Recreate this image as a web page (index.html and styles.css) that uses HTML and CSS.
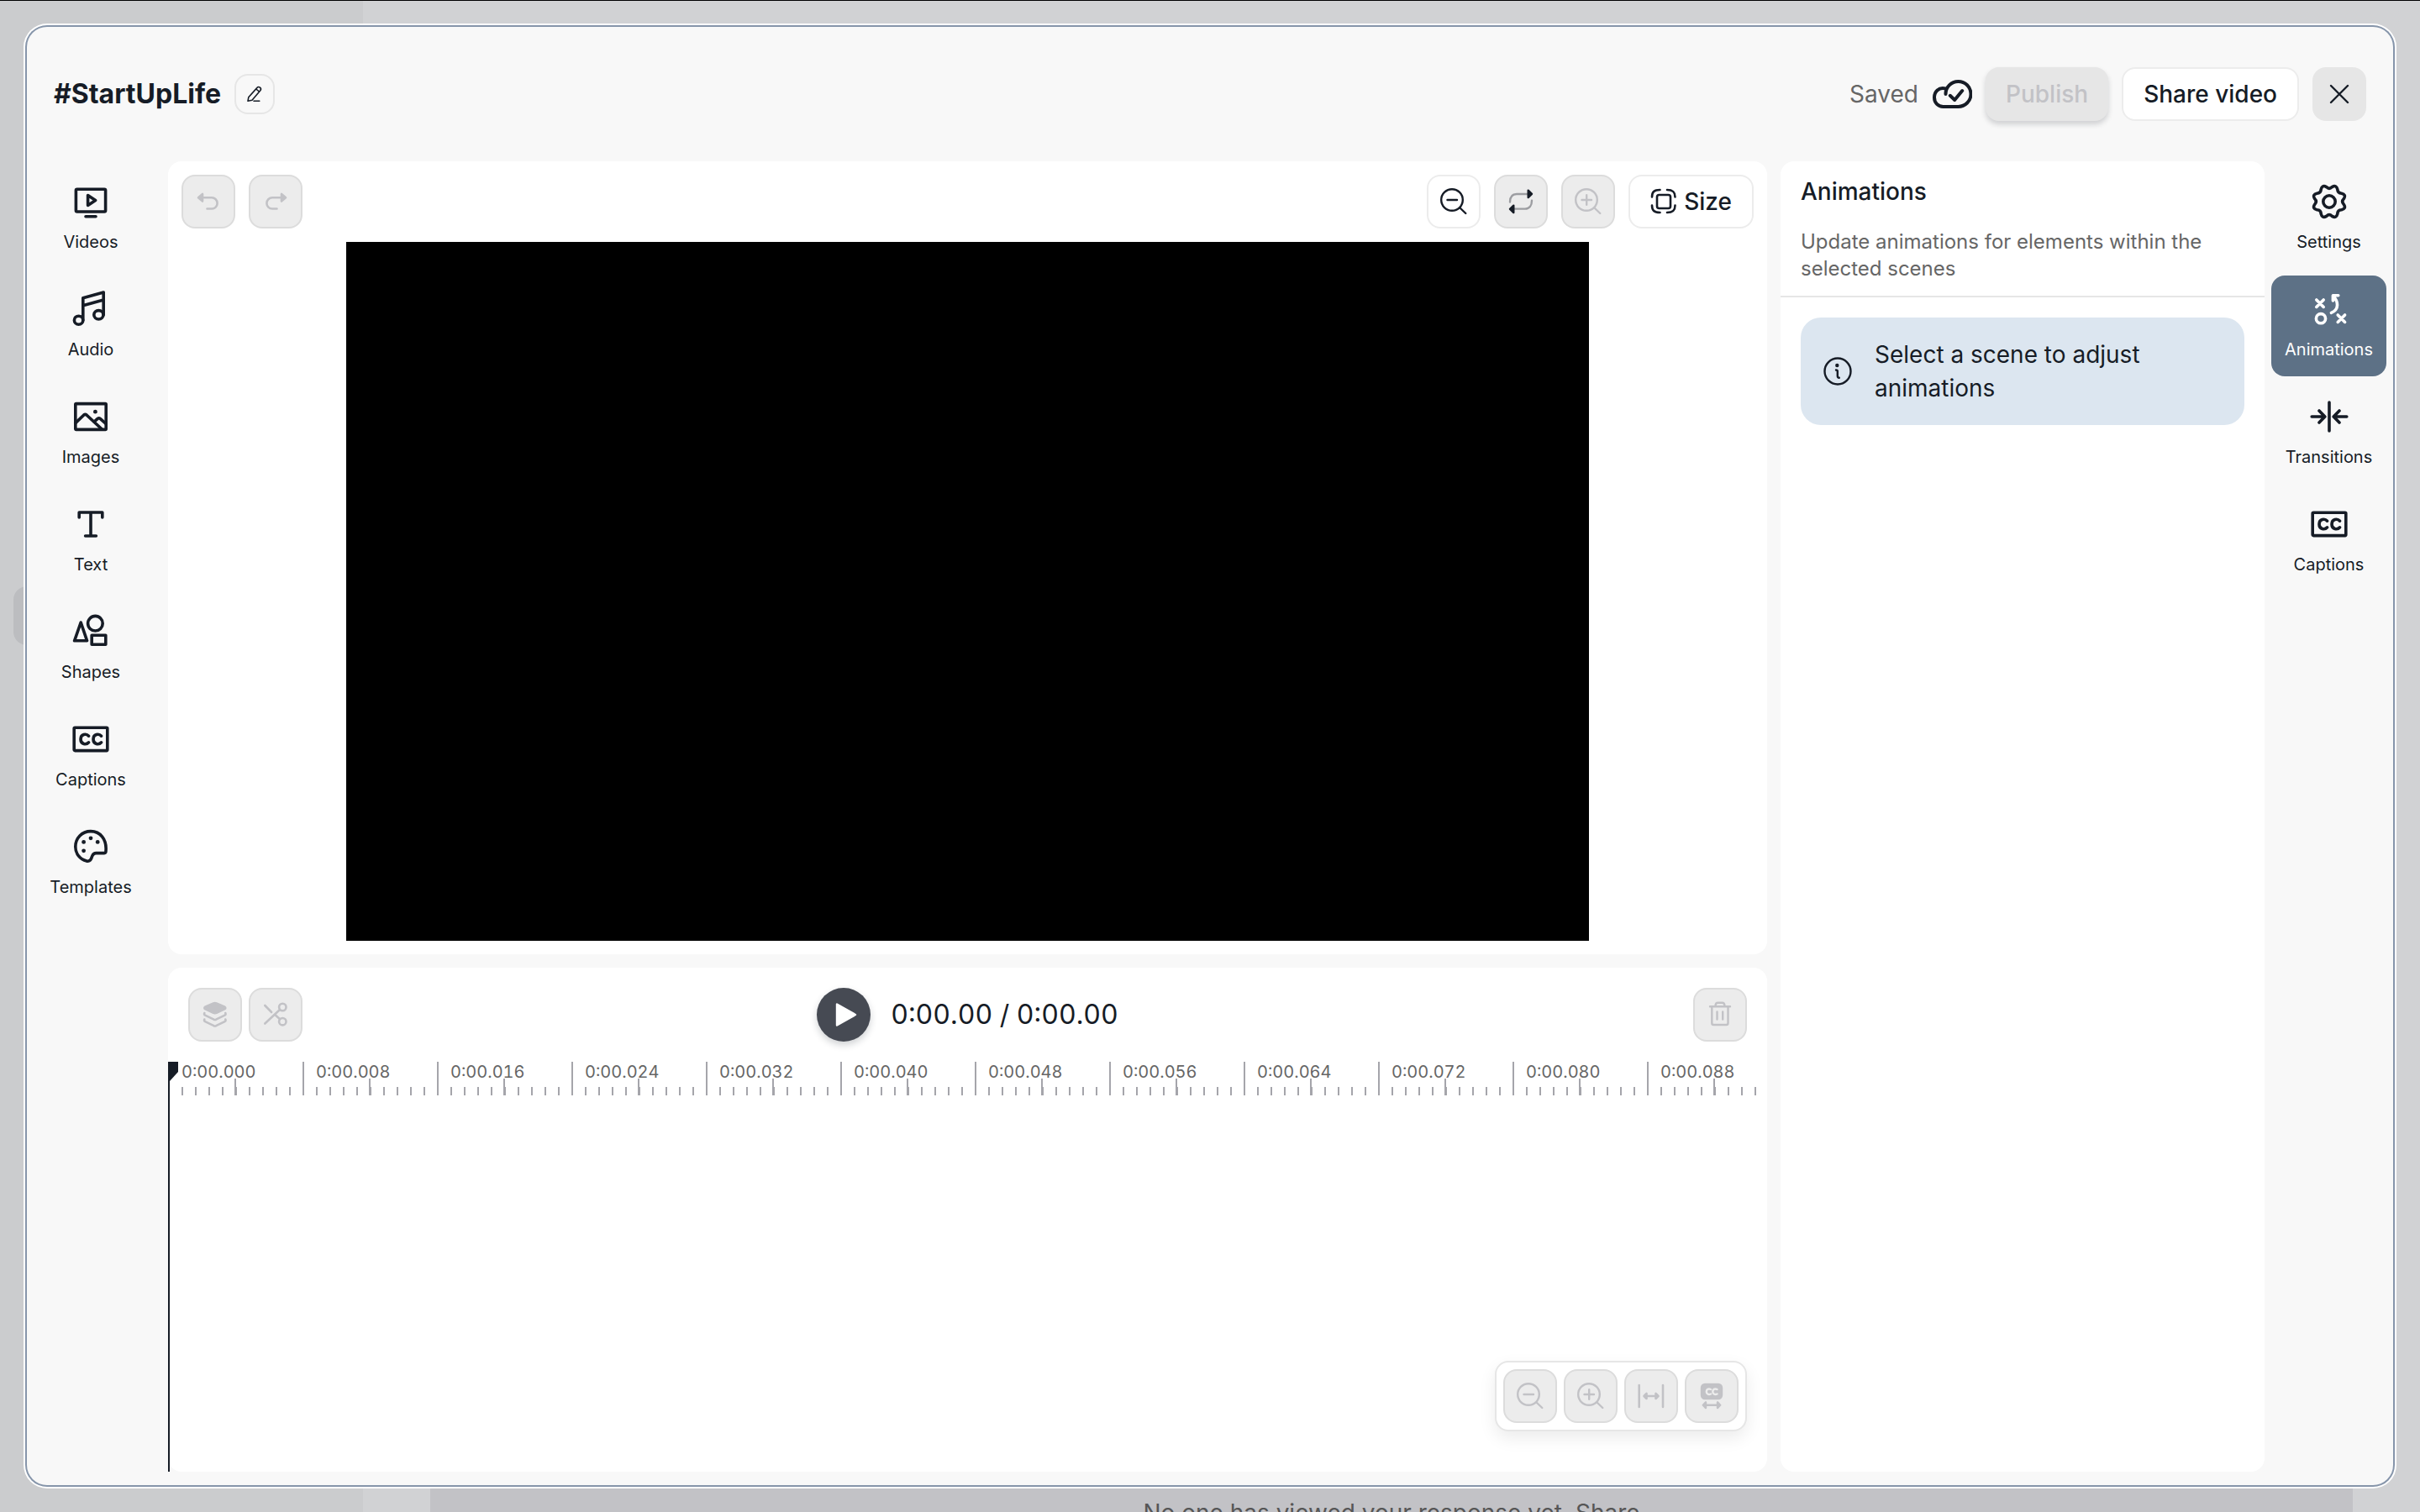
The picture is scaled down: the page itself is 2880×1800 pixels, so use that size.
FILE: index.html
```html
<!DOCTYPE html>
<html lang="en">
<head>
<meta charset="utf-8">
<meta name="viewport" content="width=device-width, initial-scale=1">
<title>#StartUpLife – Video editor</title>
<link rel="stylesheet" href="styles.css">
</head>
<body>
<svg class="sprite" aria-hidden="true">
  <symbol id="captions" viewBox="0 0 24 24"><rect x="2.1" y="5.1" width="19.8" height="13.7" rx=".5"/><path d="M10.8 10.1C9.3 8.4 6 8.9 6 12s3.300 3.600 4.800 1.900M18.300 10.100C16.800 8.400 13.500 8.900 13.500 12s3.300 3.600 4.800 1.900"/></symbol>
  <symbol id="zoom-out" viewBox="0 0 32 32"><circle cx="14" cy="14" r="12.800"/><path d="M8.500 14h11.500M23.500 23.500l6.800 6.500"/></symbol>
  <symbol id="zoom-in" viewBox="0 0 32 32"><circle cx="14" cy="14" r="12.800"/><path d="M8.500 14h11.500M14.200 8.300v11.500M23.500 23.500l6.800 6.500"/></symbol>
</svg>

<div class="backdrop" aria-hidden="true">
  <div class="backdrop-side"><span class="backdrop-handle"></span></div>
  <div class="backdrop-main"><p class="backdrop-note">No one has viewed your response yet. Share</p></div>
</div>

<main class="dialog" role="dialog" aria-labelledby="video-title">
  <header class="header">
    <h1 class="title" id="video-title">#StartUpLife</h1>
    <button class="edit" aria-label="Rename"><svg viewBox="0 0 24 24"><path d="M4 20.300l.8-4.500L14.800 4.600c1-1.200 2.400-1.300 3.600-.4s1.300 2.400.4 3.600L9 19.200l-5 1.100zM13.800 6l3.800 3.200M11 20.300h6.800"/></svg></button>
    <div class="header-actions">
      <span class="saved">Saved</span>
      <svg class="cloud" viewBox="0 0 48 48" aria-hidden="true"><path d="M13.500 38.900h18A15 15 0 1 0 16.500 24M16.200 17.500C8 15.500 3 21.500 3 28s4.500 10.900 10.500 10.900M21.800 25.800l5.400 5.200 9-11"/></svg>
      <button class="btn btn-publish" disabled>Publish</button>
      <button class="btn btn-share">Share video</button>
      <button class="btn btn-close" aria-label="Close"><svg class="icon" viewBox="0 0 32 32"><path d="M6 6l20 20M26 6L6 26"/></svg></button>
    </div>
  </header>

  <div class="workspace">
    <nav class="rail" aria-label="Media">
      <button class="rail-item"><svg viewBox="0 0 24 24"><rect x="3.200" y="4.600" width="17.600" height="13.400" rx=".7"/><path d="M10.300 8.300v5.900l4.500-2.950zM9 20.900h6"/></svg>Videos</button>
      <button class="rail-item"><svg viewBox="0 0 24 24"><ellipse cx="4.800" cy="18.600" rx="2.600" ry="2.500"/><ellipse cx="16.700" cy="15.400" rx="2.800" ry="2.600"/><path d="M7.400 18.600V5.400L19.600 2v13.400M7.400 9.900l12.200-3.400"/></svg>Audio</button>
      <button class="rail-item"><svg viewBox="0 0 24 24"><rect x="2.900" y="4.300" width="18.200" height="15.400" rx=".4"/><path d="M2.900 15.800l5-4.800c.6-.5 1-.5 1.600 0l9.300 8.600M13.900 15.200l2.200-2c.5-.4 1-.4 1.500 0l3.400 3"/><circle class="dot" cx="14.700" cy="9.100" r="1.200"/></svg>Images</button>
      <button class="rail-item"><svg viewBox="0 0 24 24"><path d="M5.100 8V5h13.800v3M12 5v14M8.800 19h6.400"/></svg>Text</button>
      <button class="rail-item"><svg viewBox="0 0 24 24"><path d="M6.100 6.500L2.300 17.400h7.500z"/><circle cx="14.700" cy="7.100" r="4.400"/><rect x="12.600" y="14.100" width="8.300" height="5.500"/></svg>Shapes</button>
      <button class="rail-item"><svg><use href="#captions"/></svg>Captions</button>
      <button class="rail-item"><svg viewBox="0 0 24 24"><path d="M20 15.800c.7 0 1-.5 1-1.300C21.600 7.500 17.600 2.800 12 2.800 6.700 2.800 2.900 6.900 2.900 12c0 4.200 2.700 7.600 6.600 8.500 1.200.3 2.400-.3 2.800-1.400.5-1.500.7-3.300 2.900-3.300z"/><g class="dot"><circle cx="7.800" cy="9.200" r="1.200"/><circle cx="12" cy="6.900" r="1.200"/><circle cx="16.100" cy="9.200" r="1.200"/><circle cx="7.800" cy="14.400" r="1.200"/></g></svg>Templates</button>
    </nav>

    <div class="center">
      <section class="panel stage" aria-label="Preview">
        <div class="toolbar">
          <div class="group">
            <button class="tool" disabled aria-label="Undo"><svg class="icon thick" viewBox="0 0 32 32"><path d="M9 11.300h11a6.600 6.600 0 0 1 0 13.200h-5.500"/><path class="solid" d="M4 11.300l5-4.300v8.600z"/></svg></button>
            <button class="tool" disabled aria-label="Redo"><svg class="icon thick" viewBox="0 0 32 32"><path d="M23 11.300H12a6.600 6.600 0 0 0 0 13.200h5.500"/><path class="solid" d="M28 11.300l-5-4.300v8.600z"/></svg></button>
          </div>
          <div class="group">
            <button class="tool plain" aria-label="Zoom out"><svg class="icon"><use href="#zoom-out"/></svg></button>
            <button class="tool reset" aria-label="Reset zoom"><svg class="icon" viewBox="0 0 32 32"><path class="faded" d="M3 16.500C3 10.500 6 7 11 7h13M29 14.800c0 6-3 9.800-8 9.800H8"/><path class="solid" d="M24.700 2.600l4.300 4.300-4.300 4.200zM7.300 20.600L3 24.900l4.300 4.200z"/></svg></button>
            <button class="tool" disabled aria-label="Zoom in"><svg class="icon"><use href="#zoom-in"/></svg></button>
            <button class="tool plain size"><svg class="icon thick" viewBox="0 0 32 32"><rect x="8" y="8" width="16" height="16" rx="2.500"/><path d="M2 10.500C2 4.500 4.500 2 11.500 2M20 2c7 0 9.500 2.500 9.500 8.500M29.500 20.500c0 6-2.500 8.500-9.500 8.500M11.500 29C4.500 29 2 26.500 2 20.500"/></svg>Size</button>
          </div>
        </div>
        <div class="canvas"></div>
      </section>

      <section class="panel timeline" aria-label="Timeline">
        <div class="transport">
          <div class="group tight">
            <button class="tool" disabled aria-label="Layers"><svg class="icon thick" viewBox="0 0 32 32"><path class="solid" d="M4 6.800L14 2.500c1.200-.5 2.400-.5 3.600 0l10 4.300c.9.500.9 1.700 0 2.300l-10 4.700c-1.200.5-2.400.5-3.600 0L4 9.100c-.9-.6-.9-1.800 0-2.300z"/><path d="M3.300 14c-.5 1.300-.2 2.200.8 2.700l10.400 5c.9.400 1.700.4 2.600 0l10.400-5c1-.5 1.300-1.400.8-2.700M3.300 21.500c-.5 1.300-.2 2.200.8 2.700l10.400 5c.9.400 1.700.4 2.600 0l10.400-5c1-.5 1.300-1.400.8-2.700"/></svg></button>
            <button class="tool" disabled aria-label="Split"><svg class="icon thick" viewBox="0 0 32 32"><circle cx="24.300" cy="7" r="4.200"/><circle cx="24.300" cy="24.200" r="4.200"/><path d="M3.300 5l7.800 8M21 10L3.300 26.500M15.800 16.500l5.300 4.700"/></svg></button>
          </div>
          <div class="playback">
            <button class="play" aria-label="Play"><svg class="icon" viewBox="0 0 32 32"><path class="solid" d="M8 3.500v25L30 16z"/></svg></button>
            <span class="time">0:00.00 / 0:00.00</span>
          </div>
          <div class="group end">
            <button class="tool" disabled aria-label="Delete"><svg class="icon" viewBox="0 0 32 32"><path d="M4 6.300h24M6.300 6.300V26c0 1.500.6 2 2 2h15.200c1.400 0 2-.5 2-2V6.300M10.500 6c0-2.700 1-4.200 3-4.200h5c2 0 3 1.500 3 4.200M12.500 12.500v9M19.200 12.500v9"/></svg></button>
          </div>
        </div>
        <div class="track">
          <div class="ruler">
            <span>0:00.000</span><span>0:00.008</span><span>0:00.016</span><span>0:00.024</span><span>0:00.032</span><span>0:00.040</span><span>0:00.048</span><span>0:00.056</span><span>0:00.064</span><span>0:00.072</span><span>0:00.080</span><span>0:00.088</span>
          </div>
          <div class="playhead"><svg viewBox="0 0 12 24"><path d="M0 0h12v12L2 23H0z"/></svg></div>
          <div class="zoombar">
            <button class="tool" disabled aria-label="Zoom timeline out"><svg class="icon"><use href="#zoom-out"/></svg></button>
            <button class="tool" disabled aria-label="Zoom timeline in"><svg class="icon"><use href="#zoom-in"/></svg></button>
            <button class="tool" disabled aria-label="Fit timeline"><svg class="icon thick" viewBox="0 0 32 32"><path d="M1.700 3v26M30 3v26M10 16h12"/><path class="solid" d="M7.500 16l3-3v6zM24.500 16l-3-3v6z"/></svg></button>
            <button class="tool" disabled aria-label="Fit captions"><svg class="icon" viewBox="0 0 32 32"><rect class="solid" x="4" y="2" width="24" height="17" rx="4"/><path class="cut" d="M15 8c-3-1.500-5.200.2-5.200 2.700S12 14.800 15 13.500M22.500 8c-3-1.500-5.200.2-5.200 2.700s2.200 4.100 5.200 2.800"/><path d="M9 26.700h14"/><path class="solid" d="M5.800 26.700L9 23.300v6.800zM26.200 26.700L23 23.300v6.800z"/></svg></button>
          </div>
        </div>
      </section>
    </div>

    <aside class="panel side">
      <header class="side-head">
        <h2>Animations</h2>
        <p>Update animations for elements within the selected scenes</p>
      </header>
      <div class="notice">
        <svg viewBox="0 0 40 40" aria-hidden="true"><circle cx="20" cy="20" r="15.500"/><circle class="dot" cx="19.300" cy="13" r="2.200"/><path d="M18 18.500c1.200 0 1.800.4 1.800 1.600v5.500c0 1.400.5 2.200 2 2.200"/></svg>
        <p>Select a scene to adjust animations</p>
      </div>
    </aside>

    <nav class="rail rail-right" aria-label="Properties">
      <button class="rail-item"><svg viewBox="0 0 24 24"><g transform="translate(12 12)"><path d="M8.700 1.700Q10.200 4.200 7.300 4.900Q5 5 4.900 7.300Q4.200 10.200 1.700 8.700Q0 7 -1.700 8.700Q-4.200 10.200 -4.900 7.300Q-5 5 -7.300 4.900Q-10.200 4.200 -8.700 1.700Q-7 0 -8.700 -1.700Q-10.200 -4.200 -7.300 -4.900Q-5 -5 -4.900 -7.300Q-4.200 -10.200 -1.700 -8.700Q0 -7 1.700 -8.700Q4.200 -10.200 4.900 -7.300Q5 -5 7.300 -4.900Q10.200 -4.200 8.700 -1.700Q7 0 8.700 1.700Z"/><circle r="3.600"/></g></svg>Settings</button>
      <button class="rail-item active" aria-current="true"><svg viewBox="0 0 24 24"><path d="M4.400 6.500l4.200 4.200M8.600 6.500l-4.200 4.200M17.100 15.500l4.200 4.200M21.300 15.500l-4.200 4.200M14.200 7V3.900h3.200M14.400 4.200c3 3.200 3.700 8-1.200 10"/><circle cx="7" cy="17.600" r="2.800"/></svg>Animations</button>
      <button class="rail-item"><svg viewBox="0 0 24 24"><path d="M12 3.500v17M1.600 12h7.500M6 8.500L9.400 12 6 15.500M22.400 12h-7.500M18 8.500L14.600 12l3.400 3.500"/></svg>Transitions</button>
      <button class="rail-item"><svg><use href="#captions"/></svg>Captions</button>
    </nav>
  </div>
</main>
</body>
</html>
```

FILE: styles.css
```css
:root {
  --ink: #161c26;
  --muted: #666666;
  --disabled: #c2c2c6;
  --line: #e6e6e6;
  --page: #f8f8f8;
}

* { box-sizing: border-box; }

body {
  margin: 0;
  height: 100vh;
  padding: 32px;
  overflow: hidden;
  font-family: Inter, "Liberation Sans", sans-serif;
  font-size: 28px;
  color: var(--ink);
  background: #d1d2d4;
}

h1, h2, p { margin: 0; }

button {
  margin: 0;
  padding: 0;
  border: 0;
  font: inherit;
  color: inherit;
  background: none;
  cursor: pointer;
}

button:disabled { cursor: default; }

svg {
  display: block;
  flex: none;
  fill: none;
  stroke: currentColor;
  stroke-width: 2;
  stroke-linecap: round;
  stroke-linejoin: round;
}

.sprite { position: absolute; width: 0; height: 0; }
.icon { width: 32px; height: 32px; stroke-width: 2.4; }
.thick { stroke-width: 2.6; }
.dot { fill: currentColor; stroke: none; }
.solid { fill: currentColor; }
.faded { stroke: #9c9da1; }
.cut { stroke: #ececec; }

/* Page that shows behind the dialog */
.backdrop {
  position: absolute;
  inset: 0;
  z-index: -1;
  display: flex;
  border-top: 1px solid #000;
}

.backdrop-side {
  display: flex;
  align-items: center;
  width: 432px;
  padding: 0 0 336px 16px;
  background: #cbccce;
}

.backdrop-handle {
  width: 32px;
  height: 70px;
  border-radius: 16px;
  background: #bcbdc0;
}

.backdrop-main {
  display: flex;
  flex: 1;
  flex-direction: column;
  justify-content: flex-end;
  padding: 0 80px;
}

.backdrop-note {
  height: 28px;
  padding-top: 12px;
  line-height: 34px;
  text-align: center;
  color: #565656;
  background: #c2c2c6;
}

/* Dialog */
.dialog {
  display: flex;
  flex-direction: column;
  height: 100%;
  border-radius: 24px;
  background: var(--page);
  box-shadow: 0 0 0 2px #8695aa, 0 0 0 4px #fff;
}

.header {
  display: flex;
  align-items: center;
  padding: 48px 32px;
}

.title {
  font-size: 32px;
  line-height: 40px;
  font-weight: 700;
}

.edit {
  display: grid;
  place-items: center;
  width: 48px;
  height: 48px;
  margin-left: 16px;
  border: 2px solid var(--line);
  border-radius: 16px;
}

.edit svg { width: 24px; height: 24px; stroke-width: 1.6; }

.header-actions {
  display: flex;
  align-items: center;
  gap: 16px;
  margin-left: auto;
}

.saved { color: var(--muted); }
.cloud { width: 48px; height: 48px; stroke-width: 4; }

.btn {
  display: grid;
  place-items: center;
  height: 64px;
  padding: 0 24px;
  border-radius: 16px;
  font-weight: 500;
}

.btn-publish {
  color: var(--disabled);
  background: #e6e6e6;
  box-shadow: 0 4px 6px rgb(22 28 38 / 18%);
}

.btn-share { border: 2px solid #ececec; background: #fff; }
.btn-close { width: 64px; padding: 0; background: #e6e6e6; }

.workspace {
  display: flex;
  flex: 1;
  min-height: 0;
  padding: 0 8px 16px;
}

.rail {
  display: flex;
  flex-direction: column;
  gap: 8px;
  width: 136px;
  margin-right: 24px;
  padding-top: 8px;
}

.rail-right { width: 137px; margin: 0 0 0 8px; }

.rail-item {
  display: flex;
  flex-direction: column;
  align-items: center;
  gap: 8px;
  padding: 16px 0;
  border-radius: 16px;
  font-size: 20px;
  line-height: 32px;
}

.rail-item svg { width: 48px; height: 48px; stroke-width: 1.8; }
.active { color: #fff; background: #5d7186; }

.center {
  display: flex;
  flex: 1;
  flex-direction: column;
  gap: 16px;
  min-width: 0;
}

.panel { border-radius: 16px; background: #fff; }

/* Preview */
.stage {
  display: flex;
  flex: 1;
  flex-direction: column;
  gap: 16px;
  min-height: 0;
  padding: 16px;
}

.toolbar { display: flex; justify-content: space-between; }
.group { display: flex; gap: 16px; }
.tight { gap: 8px; }
.end { justify-content: flex-end; }

.tool {
  display: flex;
  align-items: center;
  justify-content: center;
  width: 64px;
  height: 64px;
  border: 2px solid #dcdcdc;
  border-radius: 16px;
  color: var(--disabled);
  background: #ececec;
}

.reset { color: var(--ink); }
.plain { border-color: #ececec; color: var(--ink); background: #fff; }
.size { gap: 8px; width: auto; padding: 0 24px; font-weight: 500; }

.canvas {
  flex: 1;
  align-self: center;
  min-height: 0;
  aspect-ratio: 16 / 9;
  background: #000;
}

/* Timeline */
.timeline {
  display: flex;
  flex-direction: column;
  height: 600px;
  font-variant-numeric: tabular-nums;
}

.transport {
  display: grid;
  grid-template-columns: 1fr auto 1fr;
  align-items: center;
  padding: 24px;
}

.playback { display: flex; align-items: center; gap: 24px; }

.play {
  display: grid;
  place-items: center;
  width: 64px;
  height: 64px;
  border-radius: 50%;
  color: #fff;
  background: #464a53;
  box-shadow: 0 4px 8px rgb(22 28 38 / 20%);
}

.time { font-size: 32px; line-height: 40px; }

.track { position: relative; flex: 1; }

.ruler {
  display: flex;
  height: 40px;
  margin-right: 12px;
  overflow: hidden;
  font-size: 20px;
  line-height: 24px;
  color: var(--muted);
  background: repeating-linear-gradient(to right, #a5a5ab 0 2px, transparent 2px 16px) left bottom / 100% 10px no-repeat;
}

.ruler span {
  flex: none;
  width: 160px;
  padding-left: 16px;
  background:
    linear-gradient(#a5a5ab, #a5a5ab) left top / 2px 40px no-repeat,
    linear-gradient(#a5a5ab, #a5a5ab) 79px bottom / 2px 20px no-repeat;
}

.playhead {
  position: absolute;
  top: 0;
  bottom: 0;
  left: 0;
  width: 2px;
  background: var(--ink);
}

.playhead svg { width: 12px; height: 24px; fill: var(--ink); stroke: none; }

.zoombar {
  position: absolute;
  right: 24px;
  bottom: 48px;
  display: flex;
  gap: 8px;
  padding: 8px;
  border: 2px solid var(--line);
  border-radius: 16px;
  background: #fff;
  box-shadow: 0 8px 20px rgb(0 0 0 / 8%);
}

/* Side panel */
.side { width: 576px; margin-left: 16px; }

.side-head {
  padding: 16px 24px;
  border-bottom: 2px solid var(--line);
}

.side-head h2 {
  margin-bottom: 24px;
  font-size: 28px;
  line-height: 40px;
  font-weight: 500;
}

.side-head p {
  font-size: 24px;
  line-height: 32px;
  color: var(--muted);
}

.notice {
  display: flex;
  align-items: center;
  gap: 24px;
  margin: 24px;
  padding: 24px;
  border-radius: 24px;
  line-height: 40px;
  background: #dce6f0;
}

.notice svg { width: 40px; height: 40px; stroke-width: 2.4; }
```
